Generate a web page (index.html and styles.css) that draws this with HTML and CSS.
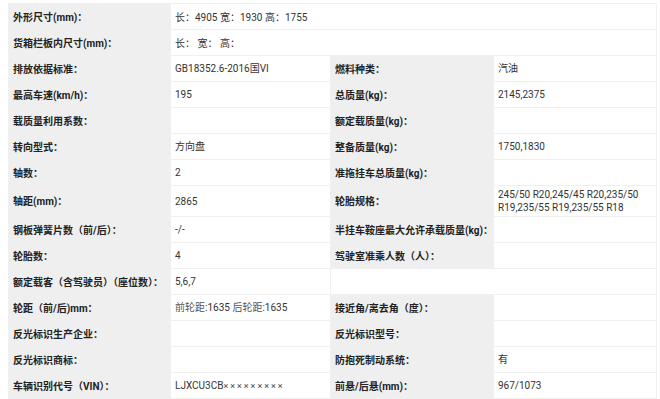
FILE: index.html
```html
<!DOCTYPE html>
<html lang="zh">
<head>
<meta charset="utf-8">
<link rel="stylesheet" href="styles.css">
</head>
<body>
<table class="spec">
  <colgroup>
    <col class="c1"><col class="c2"><col class="c3"><col class="c4">
  </colgroup>
  <tbody>
    <tr><th>外形尺寸(mm)<span class="co">：</span></th><td colspan="3">长<span class="co">：</span>4905 宽<span class="co">：</span>1930 高<span class="co">：</span>1755</td></tr>
    <tr><th>货箱栏板内尺寸(mm)<span class="co">：</span></th><td colspan="3">长<span class="co">：</span> 宽<span class="co">：</span> 高<span class="co">：</span></td></tr>
    <tr><th>排放依据标准<span class="co">：</span></th><td>GB18352.6-2016国VI</td><th>燃料种类<span class="co">：</span></th><td>汽油</td></tr>
    <tr><th>最高车速(km/h)<span class="co">：</span></th><td>195</td><th>总质量(kg)<span class="co">：</span></th><td>2145,2375</td></tr>
    <tr><th>载质量利用系数<span class="co">：</span></th><td></td><th>额定载质量(kg)<span class="co">：</span></th><td></td></tr>
    <tr><th>转向型式<span class="co">：</span></th><td>方向盘</td><th>整备质量(kg)<span class="co">：</span></th><td>1750,1830</td></tr>
    <tr><th>轴数<span class="co">：</span></th><td>2</td><th>准拖挂车总质量(kg)<span class="co">：</span></th><td></td></tr>
    <tr class="tall"><th>轴距(mm)<span class="co">：</span></th><td>2865</td><th>轮胎规格<span class="co">：</span></th><td>245/50 R20,245/45 R20,235/50 R19,235/55 R19,235/55 R18</td></tr>
    <tr><th>钢板弹簧片数（前/后）<span class="co">：</span></th><td>-/-</td><th>半挂车鞍座最大允许承载质量(kg)<span class="co">：</span></th><td></td></tr>
    <tr><th>轮胎数<span class="co">：</span></th><td>4</td><th>驾驶室准乘人数（人）<span class="co">：</span></th><td></td></tr>
    <tr><th>额定载客（含驾驶员）（座位数）<span class="co">：</span></th><td>5,6,7</td><td colspan="2"></td></tr>
    <tr><th>轮距（前/后)mm<span class="co">：</span></th><td><span class="soft">前轮距</span>:1635 <span class="soft">后轮距</span>:1635</td><th>接近角/离去角（度）<span class="co">：</span></th><td></td></tr>
    <tr><th>反光标识生产企业<span class="co">：</span></th><td></td><th>反光标识型号<span class="co">：</span></th><td></td></tr>
    <tr><th>反光标识商标<span class="co">：</span></th><td></td><th>防抱死制动系统<span class="co">：</span></th><td>有</td></tr>
    <tr><th>车辆识别代号（VIN）<span class="co">：</span></th><td>LJXCU3CB<span class="mask">×××××××××</span></td><th>前悬/后悬(mm)<span class="co">：</span></th><td>967/1073</td></tr>
    <tr><th>&nbsp;</th><td></td><th>&nbsp;</th><td></td></tr>
  </tbody>
</table>
</body>
</html>
```

FILE: styles.css
```css
html, body {
  margin: 0;
  background: #ffffff;
}
body {
  padding: 3px 4px 0 8px;
  font-family: Roboto, "Noto Sans CJK SC", sans-serif;
  font-size: 10px;
  line-height: 13px;
  color: #333333;
}
.spec {
  width: 648px;
  border-collapse: collapse;
  table-layout: fixed;
}
.c1 { width: 162px; }
.c2 { width: 160px; }
.c3 { width: 163px; }
.c4 { width: 163px; }
.spec tr {
  height: 26px;
}
.spec th,
.spec td {
  border: 1px solid #f0f0f0;
  padding: 2px 4px;
  text-align: left;
  vertical-align: middle;
  white-space: nowrap;
  overflow: hidden;
}
.spec th {
  background: #efefef;
  font-weight: bold;
  color: #222222;
}
.spec td {
  background: #ffffff;
  color: #333333;
}
.spec tr.tall td {
  white-space: normal;
}
.co {
  font-family: "Noto Sans CJK JP", sans-serif;
}
.soft {
  color: #555555;
}
.mask {
  font-size: 9px;
  letter-spacing: 2px;
  color: #444444;
}
```
